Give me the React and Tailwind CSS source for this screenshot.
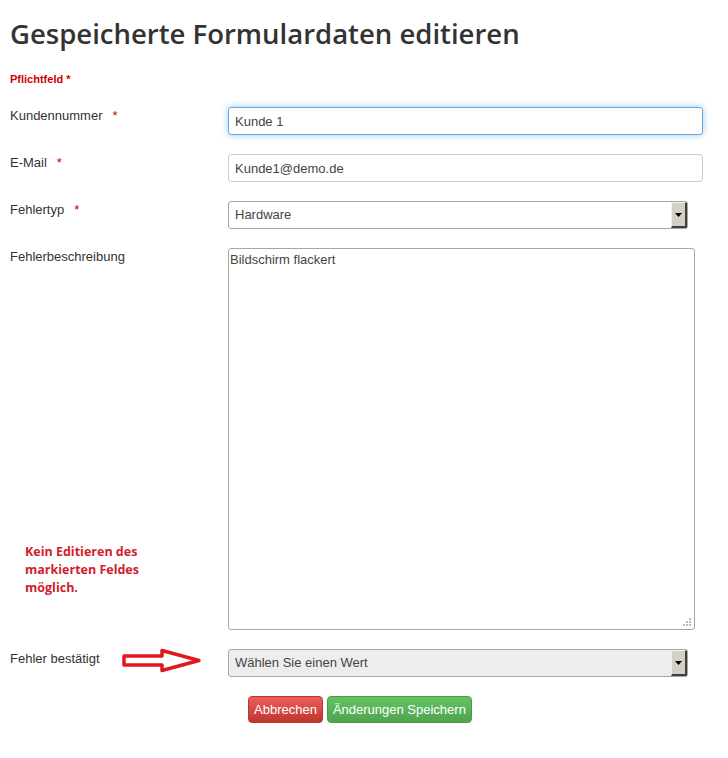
import React from 'react';

const Star = () => <span className="ml-[10px] text-[#cc0000]">*</span>;

const SelectBox = ({ value, gray }) => (
  <div
    className={`flex h-[28px] w-[460px] items-center justify-between rounded-[3px] border border-[#a6a6a6] pl-[6px] ${
      gray ? 'bg-[#ededed]' : 'bg-white'
    }`}
  >
    <span className="text-[13px] text-[#444]">{value}</span>
    <span className="flex h-[26px] w-[16px] items-center justify-center border-t border-l border-[#f2f1ee] border-r-2 border-b-2 border-r-[#404040] border-b-[#404040] bg-[#d4d0c8]">
      <svg width="7" height="4" viewBox="0 0 7 4">
        <path d="M0 0h7L3.5 4z" fill="#000" />
      </svg>
    </span>
  </div>
);

const Arrow = () => (
  <svg width="80" height="26" viewBox="0 0 80 26" className="ml-[22px] mt-[-2px]">
    <polygon
      points="2,8 40,8 40,2.5 77,12.5 40,22.5 40,17 2,17"
      fill="white"
      stroke="#e0191f"
      strokeWidth="3.5"
      strokeLinejoin="round"
    />
  </svg>
);

export default function App() {
  return (
    <div className="min-h-screen bg-white px-[10px] pt-[16px] font-['Liberation_Sans',Arial,sans-serif] text-[13px] text-[#333]">
      <h1 className="font-['Open_Sans',sans-serif] text-[27.5px] font-semibold leading-[36px] text-[#333]">
        Gespeicherte Formulardaten editieren
      </h1>

      <p className="mt-[20px] text-[11px] font-bold leading-[14px] text-[#cc0000]">Pflichtfeld *</p>

      <div className="mt-[21px] grid grid-cols-[218px_1fr] gap-y-[19px]">
        <label className="leading-[18px]">
          Kundennummer
          <Star />
        </label>
        <input
          readOnly
          value="Kunde 1"
          className="h-[28px] w-[475px] rounded-[3px] border border-[#68a8e2] px-[6px] text-[13px] text-[#444] shadow-[0_0_7px_rgba(82,168,236,0.6)] outline-none"
        />

        <label className="leading-[18px]">
          E-Mail
          <Star />
        </label>
        <input
          readOnly
          value="Kunde1@demo.de"
          className="h-[28px] w-[475px] rounded-[3px] border border-[#cccccc] px-[6px] text-[13px] text-[#444] outline-none"
        />

        <label className="leading-[18px]">
          Fehlertyp
          <Star />
        </label>
        <SelectBox value="Hardware" />

        <div className="flex flex-col">
          <label className="leading-[18px]">Fehlerbeschreibung</label>
          <p className="mb-[33px] ml-[15px] mt-auto font-['Open_Sans',sans-serif] text-[12.5px] font-bold leading-[18px] text-[#d1202a]">
            Kein Editieren des
            <br />
            markierten Feldes
            <br />
            möglich.
          </p>
        </div>
        <div className="relative h-[382px] w-[467px] rounded-[3px] border border-[#a6a6a6] px-[1px] pt-[3px] text-[13px] leading-[16px] text-[#444]">
          Bildschirm flackert
          <svg width="10" height="10" viewBox="0 0 10 10" className="absolute bottom-[2px] right-[2px]">
            <g fill="#bdbdbd">
              <rect x="7" y="1" width="2" height="2" />
              <rect x="4" y="4" width="2" height="2" />
              <rect x="7" y="4" width="2" height="2" />
              <rect x="1" y="7" width="2" height="2" />
              <rect x="4" y="7" width="2" height="2" />
              <rect x="7" y="7" width="2" height="2" />
            </g>
          </svg>
        </div>

        <div className="flex items-start pt-[1px]">
          <label className="leading-[18px]">Fehler bestätigt</label>
          <Arrow />
        </div>
        <SelectBox value="Wählen Sie einen Wert" gray />
      </div>

      <div className="ml-[238px] mt-[19px] flex gap-[4px]">
        <button className="h-[27px] rounded-[4px] border border-[#b33630] bg-gradient-to-b from-[#ee5f5b] to-[#bd362f] px-[5px] text-[13px] text-white">
          Abbrechen
        </button>
        <button className="h-[27px] rounded-[4px] border border-[#4a9a4a] bg-gradient-to-b from-[#62c462] to-[#51a351] px-[5px] text-[13px] text-white">
          Änderungen Speichern
        </button>
      </div>
    </div>
  );
}
